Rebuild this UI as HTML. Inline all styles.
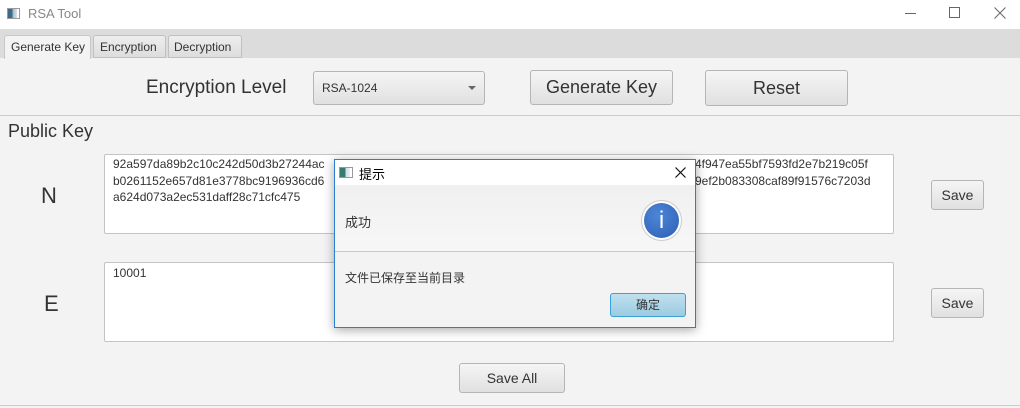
<!DOCTYPE html>
<html><head><meta charset="utf-8"><style>
*{box-sizing:border-box;margin:0;padding:0}
body{width:1020px;height:408px;overflow:hidden;background:#f3f3f3;font-family:"Liberation Sans","Noto Sans CJK SC",sans-serif;color:#333;position:relative}
.a{position:absolute}
.btn{position:absolute;border:1px solid #b5b5b5;border-radius:3px;background:linear-gradient(#f5f5f5,#e0e0e0);text-align:center;color:#333}
.ta{position:absolute;background:#fff;border:1px solid #c4c4c4;border-radius:2px}
.t{font-size:12px;line-height:16.5px;color:#333;white-space:nowrap}
</style></head><body>
<div class="a" style="left:0;top:0;width:1020px;height:29px;background:#fff"></div>
<div class="a" style="left:7px;top:8px;width:13px;height:11px;border:1px solid #999;background:linear-gradient(90deg,#3a6b8c 40%,#9bb 40%,#dde 80%,#fff 80%)"></div>
<div class="a" style="left:28px;top:6px;font-size:13px;color:#888">RSA Tool</div>
<div class="a" style="left:905px;top:13px;width:11px;height:1px;background:#666"></div>
<div class="a" style="left:949px;top:7px;width:11px;height:11px;border:1px solid #666"></div>
<svg class="a" style="left:994px;top:7px" width="12" height="12"><path d="M0.5 0.5L11.5 11.5M11.5 0.5L0.5 11.5" stroke="#666" stroke-width="1"/></svg>
<div class="a" style="left:0;top:29px;width:1020px;height:29px;background:#dcdcdc"></div>
<div class="a" style="left:4px;top:35px;width:87px;height:24px;background:#f3f3f3;border:1px solid #c8c8c8;border-bottom:none;border-radius:3px 3px 0 0;font-size:12px;padding:4px 0 0 6px">Generate Key</div>
<div class="a" style="left:93px;top:35px;width:73px;height:23px;background:linear-gradient(#eee,#ddd);border:1px solid #c0c0c0;border-radius:3px 3px 0 0;font-size:12px;padding:4px 0 0 6px">Encryption</div>
<div class="a" style="left:168px;top:35px;width:74px;height:23px;background:linear-gradient(#eee,#ddd);border:1px solid #c0c0c0;border-radius:3px 3px 0 0;font-size:12px;padding:4px 0 0 5px">Decryption</div>

<div class="a" style="left:146px;top:77px;font-size:19px">Encryption Level</div>
<div class="btn" style="left:313px;top:71px;width:172px;height:34px;text-align:left;font-size:12px;padding:9px 0 0 8px">RSA-1024</div>
<div class="a" style="left:468px;top:86px;border:4px solid transparent;border-top:4px solid #666"></div>
<div class="btn" style="left:530px;top:70px;width:143px;height:35px;font-size:18px;padding-top:6px">Generate Key</div>
<div class="btn" style="left:705px;top:70px;width:143px;height:36px;font-size:18px;padding-top:7px">Reset</div>
<div class="a" style="left:0;top:115px;width:1020px;height:1px;background:#ccc"></div>
<div class="a" style="left:8px;top:121px;font-size:18px">Public Key</div>

<div class="a" style="left:41px;top:183px;font-size:22px">N</div>
<div class="ta" style="left:104px;top:154px;width:790px;height:80px"></div>
<div class="a t" style="left:113px;top:156px">92a597da89b2c10c242d50d3b27244ac<br>b0261152e657d81e3778bc9196936cd6<br>a624d073a2ec531daff28c71cfc475</div>
<div class="a t" style="left:695px;top:156px">4f947ea55bf7593fd2e7b219c05f<br>9ef2b083308caf89f91576c7203d</div>
<div class="btn" style="left:931px;top:180px;width:53px;height:30px;font-size:14px;padding-top:6px">Save</div>

<div class="a" style="left:44px;top:291px;font-size:22px">E</div>
<div class="ta" style="left:104px;top:262px;width:790px;height:80px"></div>
<div class="a t" style="left:113px;top:265px">10001</div>
<div class="btn" style="left:931px;top:288px;width:53px;height:30px;font-size:14px;padding-top:6px">Save</div>
<div class="btn" style="left:459px;top:363px;width:106px;height:30px;font-size:14px;padding-top:6px">Save All</div>
<div class="a" style="left:0;top:405px;width:1020px;height:1px;background:#ccc"></div>

<div class="a" style="left:334px;top:159px;width:362px;height:169px;border:1px solid #2a7fd4;background:#f3f3f3;box-shadow:0 2px 10px rgba(0,0,0,.35)">
 <div class="a" style="left:0;top:0;width:360px;height:25px;background:#fff"></div>
 <div class="a" style="left:4px;top:7px;width:14px;height:11px;border:1px solid #999;background:linear-gradient(90deg,#3a7a6c 45%,#cde 45%,#eee 85%,#fff 85%)"></div>
 <div class="a" style="left:24px;top:4px;font-size:13px;color:#000">提示</div>
 <svg class="a" style="left:340px;top:7px" width="11" height="11"><path d="M0.5 0.5L10.5 10.5M10.5 0.5L0.5 10.5" stroke="#111" stroke-width="1.2"/></svg>
 <div class="a" style="left:0;top:25px;width:360px;height:67px;background:linear-gradient(#f0f0f0,#f7f7f7);border-bottom:1px solid #c8c8c8"></div>
 <div class="a" style="left:10px;top:52px;font-size:13px">成功</div>
 <div class="a" style="left:306px;top:40px;width:41px;height:41px;border-radius:50%;background:#fff;border:1px solid #ccc"></div>
 <div class="a" style="left:309px;top:43px;width:35px;height:35px;border-radius:50%;background:radial-gradient(circle at 40% 35%,#4d86d6,#2d5fb5);color:#fff;font-size:24px;text-align:center;line-height:35px">i</div>
 <div class="a" style="left:10px;top:109px;font-size:12px">文件已保存至当前目录</div>
 <div class="a" style="left:275px;top:133px;width:76px;height:24px;border:1px solid #3aa0d8;border-radius:3px;background:linear-gradient(#bfe0ef,#9ccbe0);font-size:12px;text-align:center;line-height:22px">确定</div>
</div>
</body></html>
